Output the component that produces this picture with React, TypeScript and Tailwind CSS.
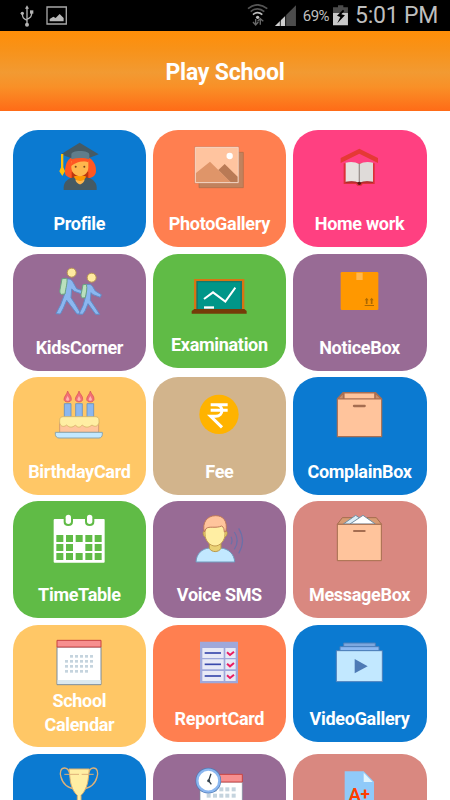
import React from 'react';

interface Tile {
  label: string;
  color: string;
  icon: React.ReactNode;
  height?: string;
  labelClass?: string;
}

interface IconProps {
  viewBox: string;
  children: React.ReactNode;
}

function Icon({ viewBox, children }: IconProps) {
  return (
    <svg viewBox={viewBox} className="w-16 h-16 shrink-0 -ml-[0.4px]">
      {children}
    </svg>
  );
}

const ProfileIcon = () => (
  <Icon viewBox="142 30 192 192">
    <path d="M196 160c-1-32 12-54 44-54s51 22 49 48c0 12-12 20-22 21h-50c-12-2-20-8-21-15z" fill="#ff5722" />
    <path d="M216 155h50v30h-50z" fill="#bf360c" />
    <path d="M192 210v-8c0-17 15-28 32-30h34c18 2 33 14 33 30v8z" fill="#455a64" />
    <path d="M224 168h34v5l-16 20-18-20z" fill="#ff9800" />
    <path d="M227 178q14 10 28 0c-1 8-8 15-14 15s-13-7-14-15z" fill="#ffb74d" />
    <path d="M215 124h51v18c0 16-12 27-25 27s-26-11-26-27z" fill="#ffb74d" />
    <path d="M214 138c0-17 7-25 20-26h32v15c-13-8-34-2-52 11z" fill="#ff5722" />
    <path d="M240 68l57 35-27 10H211l-27-10z" fill="#455a64" />
    <path d="M215 118v-14c0-7 10-11 26-11s28 4 28 11v14c-15-5-36-5-54 0z" fill="#607d8b" />
    <path d="M184 102h7v40l5 12-8 14-9-14 5-12z" fill="#ffc107" />
    <circle cx="228" cy="140" r="3" fill="#784719" />
    <circle cx="254" cy="140" r="3" fill="#784719" />
  </Icon>
);

const PhotoIcon = () => (
  <Icon viewBox="562 30 192 192">
    <path d="M598 97h133v106H598z" fill="#c1825d" stroke="#aa6c49" strokeWidth="2" />
    <path d="M587 82h129v106H587z" fill="#ffc49f" />
    <path d="M588 160l43-35 62 62H588z" fill="#df9569" />
    <path d="M656 150l19-18 39 38v17h-21z" fill="#b97a55" />
    <path d="M587 82h129v106H587z" fill="none" stroke="#f7e8e0" strokeWidth="2.5" />
    <path d="M585 80h133v110H585z" fill="none" stroke="#c98263" strokeWidth="1.5" />
    <circle cx="690" cy="108" r="9.5" fill="#fff" />
  </Icon>
);

const HomeworkIcon = () => (
  <Icon viewBox="307 30 192 192">
    <path d="M348 114l56-28 56 28v15l-56-28-56 28z" fill="#e53935" />
    <path d="M357 130h93v62h-36l-4 5h-12l-4-5h-37z" fill="#dc3038" />
    <path d="M363 128q24-5 41 4v56q-17-6-41-2z" fill="#e6e2e0" />
    <path d="M445 128q-24-5-41 4v56q17-6 41-2z" fill="#dfdbd9" />
    <path d="M404 131v56" stroke="#9c9390" strokeWidth="4" />
    <path d="M363 187q26-4 41 3 15-7 41-3" fill="none" stroke="#a52b2d" strokeWidth="4" />
    <circle cx="404" cy="190" r="5" fill="#5a1617" />
  </Icon>
);

const KidsIcon = () => (
  <Icon viewBox="142 18 192 192">
    <g stroke="#618dc9" strokeWidth="3" fill="#8bb7f0" strokeLinejoin="round">
      <path d="M200 94c10-4 17 2 21 10l10 18 16 6-3 9-20-7-8-7-2 26 13 20 17 29h-12l-31-41-10 24-9 17-13-1 14-27 12-32z" />
      <path d="M261 110c10-3 16 1 20 9l6 10 18 11-3 8-22-8-6-6-2 23 15 22 13 20h-12l-23-32-9 22-7 10-11-1 12-25 8-28z" />
    </g>
    <g stroke="#6aa384" strokeWidth="3" fill="#bae0bd">
      <path d="M187 92l14-1c4 8-3 31-5 47l-11 1c-5-3-5-9-4-14z" />
      <path d="M250 110l10-1c4 12-1 28-3 40l-9 1c-5-4-4-10-3-14z" />
    </g>
    <g stroke="#b99751" strokeWidth="3" fill="#ffeaa0">
      <circle cx="216" cy="74" r="13.5" />
      <circle cx="276" cy="89" r="13.5" />
    </g>
  </Icon>
);

const ExamIcon = () => (
  <Icon viewBox="562 18 192 192">
    <path d="M583 93h151v92H583z" fill="#d87413" />
    <path d="M590 99h137v84H590z" fill="#13796c" />
    <path d="M595 103h127v80H595z" fill="#009688" />
    <path d="M576 189l8-6h150l7 6v8H576z" fill="#753b08" />
    <path d="M613 153l27-20 37 28 30-42" fill="none" stroke="#fff" strokeWidth="6" />
    <path d="M613 175h30v7h-30z" fill="#fff" />
  </Icon>
);

const NoticeIcon = () => (
  <Icon viewBox="307 18 192 192">
    <rect x="348" y="72" width="113" height="114" rx="4" fill="#ff9800" />
    <path d="M395 74h19v22h-19z" fill="#ffb74d" />
    <path d="M426 149l6 8h-3.500v11h-5v-11H420zM441 149l6 8h-3.500v11h-5v-11H435zM420 171h28v3h-28z" fill="#ad6800" />
  </Icon>
);

const CakeIcon = () => (
  <Icon viewBox="142 16 192 192">
    {[204, 238, 272].map((x) => (
      <g key={x}>
        <path d={`M${x - 10} 96h20v43h-20z`} fill="#8bb7f0" stroke="#6790bf" strokeWidth="2.500" />
        <path d={`M${x} 58c2 9 12 14 11 25 0 5-5 8-11 8s-11-3-11-8c0-9 9-15 11-25z`} fill="#f36f75" stroke="#d55257" strokeWidth="2" />
        <path d={`M${x} 72c1 5 5 7 5 12q-5 7-10 0c0-5 4-7 5-12z`} fill="#ffb4ae" />
      </g>
    ))}
    <path d="M180 151h117v31H180z" fill="#ffc49c" stroke="#ca926c" strokeWidth="2.500" />
    <path d="M180 154v-9c0-6 4-10 11-10h96c7 0 11 4 11 10v9c-4 10-12 13-21 6-9 7-19 10-29 0-7 9-15 8-21 0-9 9-18 8-26 0-9 7-18 5-21-6z" fill="#ffeea3" stroke="#d5b468" strokeWidth="2.500" />
    <path d="M167 182h141v6c0 6-4 11-10 11H178c-6 0-11-5-11-11z" fill="#c2e8ff" stroke="#8aa5ae" strokeWidth="3" />
  </Icon>
);

const FeeIcon = () => (
  <Icon viewBox="562 16 192 192">
    <circle cx="658" cy="128" r="59" fill="#ffb300" />
    <path d="M633 99h51M633 116h51M633 99h15c25 0 25 35 0 35h-15l34 33" fill="none" stroke="#fff" strokeWidth="9" />
  </Icon>
);

const ComplainIcon = () => (
  <Icon viewBox="307 16 192 192">
    <g stroke="#a96f52" strokeWidth="3.500" strokeLinejoin="round">
      <path d="M338 82l17-19h98l18 19z" fill="#ca8f6b" />
      <path d="M358 64h93v18h-93z" fill="#ffc49c" />
      <path d="M338 82h133v113H338z" fill="#ffc49c" />
      <path d="M338 82l18-18v18M471 82l-20-18v18" fill="none" />
    </g>
    <path d="M388 103h32" stroke="#a56d50" strokeWidth="7" strokeLinecap="round" />
  </Icon>
);

const TimeTableIcon = () => (
  <Icon viewBox="142 15 192 192">
    <rect x="162" y="69" width="153" height="131" rx="3" fill="#fff" />
    {[206, 270].map((x) => (
      <g key={x}>
        <path d={`M${x - 14} 67v10q0 13 14 13t14-13V67z`} fill="#60bb46" />
        <rect x={x - 8} y="56" width="16" height="28" rx="8" fill="#fff" />
      </g>
    ))}
    {[117, 144, 171].map((y) =>
      [170, 199, 228, 257, 285].map((x) =>
        y === 144 && x === 228 ? null : <rect key={`${x}-${y}`} x={x} y={y} width="21" height="21" fill="#60bb46" />
      )
    )}
  </Icon>
);

const VoiceIcon = () => (
  <Icon viewBox="562 15 192 192">
    <path d="M589 198c1-25 18-40 40-42h34c23 2 41 18 42 42z" fill="#c2e8ff" stroke="#719abd" strokeWidth="3" />
    <path d="M629 143h35v14c-7 13-28 13-35 0z" fill="#ead174" stroke="#b99748" strokeWidth="3" />
    <path d="M616 105c-9-1-6 17 2 19M676 105c10-1 7 17-2 19" fill="#f5d978" stroke="#b99748" strokeWidth="3" />
    <path d="M616 94c9-9 46-12 60 0v20c0 20-15 36-30 36s-30-16-30-36z" fill="#ffeea3" stroke="#c39d4f" strokeWidth="3" />
    <path d="M614 108c-7-27 7-49 34-49 23 0 36 16 31 46l-5 3c-1-9-1-14-8-18-17 8-38-1-47 8z" fill="#ffc49c" stroke="#bf7959" strokeWidth="3" />
    <path d="M694 122q6 11 0 23M704 108q17 25 0 52M717 97q23 37 0 75" fill="none" stroke="#6b70a8" strokeWidth="3.500" />
  </Icon>
);

const MessageIcon = () => (
  <Icon viewBox="307 15 192 192">
    <g strokeWidth="3" strokeLinejoin="round">
      <path d="M338 85l15-20h102l16 20z" fill="#d89b72" stroke="#a46d4d" />
      <path d="M356 84l37-26 39 26z" fill="#dcecf6" stroke="#718da1" />
      <path d="M376 84l39-26 37 26z" fill="#fff" stroke="#718da1" />
      <path d="M338 85h132v109H338z" fill="#ffc49c" stroke="#a46d4d" />
    </g>
    <path d="M388 105h32" stroke="#a56d50" strokeWidth="6" strokeLinecap="round" />
  </Icon>
);

const CalendarIcon = () => (
  <Icon viewBox="142 15 192 192">
    <path d="M172 81h132v113H172z" fill="#fff" stroke="#788b9c" strokeWidth="3" />
    <path d="M174 180h129v12H174z" fill="#dce9ef" />
    <path d="M172 61h132v20H172z" fill="#f78f8f" stroke="#c74343" strokeWidth="3" />
    {[105, 120, 135, 150].map((y, row) =>
      [196, 211, 226, 241, 256, 271].map((x, col) =>
        (row === 0 && col === 0) || (row === 3 && col === 5) ? null : (
          <rect key={`${x}-${y}`} x={x} y={y} width="9" height="8" fill="#c5d4de" />
        )
      )
    )}
  </Icon>
);

const ReportIcon = () => (
  <Icon viewBox="562 15 192 192">
    <path d="M601 65h114v125H601z" fill="#9fa8da" />
    {[84, 118, 153].map((y) => (
      <g key={y}>
        <path d={`M608 ${y}h64v30h-64zM677 ${y}h31v30h-31z`} fill="#e8eaf6" />
        <path d={`M615 ${y + 15}h49`} stroke="#3949ab" strokeWidth="5" />
        <path d={`M682 ${y + 13}l9 8 12-10`} fill="none" stroke="#e91e63" strokeWidth="6" />
      </g>
    ))}
  </Icon>
);

const VideoIcon = () => (
  <Icon viewBox="307 15 192 192">
    <g stroke="#4d7eb9" strokeWidth="3">
      <path d="M357 69h95v11h-95z" fill="#7da8df" />
      <path d="M346 80h117v12H346z" fill="#8bb7f0" />
      <path d="M335 92h138v93H335z" fill="#c2e8ff" />
    </g>
    <path d="M390 117l39 22-39 21z" fill="#4e7ab5" />
  </Icon>
);

const TrophyIcon = () => (
  <Icon viewBox="142 402 192 192">
    <path d="M211 461c-4-12-9-17-16-17-13 0-15 14-11 27 5 21 22 35 43 35M266 461c3-12 8-17 15-17 13 0 15 14 11 27-5 21-22 35-43 35" fill="none" stroke="#dfb177" strokeWidth="4" />
    <path d="M208 447h61l-3 28c-3 26-13 43-22 51v32h-11v-32c-10-8-20-27-22-51z" fill="#ffeea3" stroke="#dcb06f" strokeWidth="3" />
    <path d="M194 463h44M246 463h36" stroke="#dfb177" strokeWidth="3" />
  </Icon>
);

const ScheduleIcon = () => (
  <Icon viewBox="562 402 192 192">
    <path d="M601 486h127v90H601z" fill="#fff" stroke="#788b9c" strokeWidth="2" />
    <path d="M626 463h102v23H626z" fill="#f78f8f" stroke="#c74343" strokeWidth="3" />
    {[502, 521, 540].map((y) =>
      [621, 640, 659, 677, 696].map((x) => <rect key={`${x}-${y}`} x={x} y={y} width="12" height="12" fill="#c5d4de" />)
    )}
    <circle cx="626" cy="482" r="33" fill="#fff" stroke="#4e7ab5" strokeWidth="11" />
    <circle cx="626" cy="482" r="33" fill="#fff" stroke="#8bb7f0" strokeWidth="7" />
    <path d="M634 461l-7 21 8 11" fill="none" stroke="#35434e" strokeWidth="4" />
    <circle cx="627" cy="482" r="4.500" fill="#35434e" />
  </Icon>
);

const GradeIcon = () => (
  <Icon viewBox="307 402 192 192">
    <path d="M360 454h57l31 31v91h-88z" fill="#90caf9" />
    <path d="M417 458l27 28h-27z" fill="#e1f5fe" />
    <text x="373" y="539" fontFamily="Roboto" fontWeight="700" fontSize="52" textLength="63" lengthAdjust="spacingAndGlyphs" fill="#ff3d00">
      A+
    </text>
  </Icon>
);

const tiles: Tile[] = [
  { label: 'Profile', color: 'bg-[#0b7ad1]', icon: <ProfileIcon /> },
  { label: 'PhotoGallery', color: 'bg-[#ff7f50]', icon: <PhotoIcon /> },
  { label: 'Home work', color: 'bg-[#ff4081]', icon: <HomeworkIcon /> },
  { label: 'KidsCorner', color: 'bg-[#986b95]', icon: <KidsIcon /> },
  { label: 'Examination', color: 'bg-[#60bb46]', icon: <ExamIcon />, height: 'h-[114.5px]', labelClass: 'mt-[15.5px]' },
  { label: 'NoticeBox', color: 'bg-[#986b95]', icon: <NoticeIcon /> },
  { label: 'BirthdayCard', color: 'bg-[#ffc766]', icon: <CakeIcon /> },
  { label: 'Fee', color: 'bg-[#d2b48c]', icon: <FeeIcon /> },
  { label: 'ComplainBox', color: 'bg-[#0b7ad1]', icon: <ComplainIcon /> },
  { label: 'TimeTable', color: 'bg-[#60bb46]', icon: <TimeTableIcon /> },
  { label: 'Voice SMS', color: 'bg-[#986b95]', icon: <VoiceIcon /> },
  { label: 'MessageBox', color: 'bg-[#d98880]', icon: <MessageIcon /> },
  { label: 'School Calendar', color: 'bg-[#ffc766]', icon: <CalendarIcon />, height: 'h-[122.4px]', labelClass: 'w-20' },
  { label: 'ReportCard', color: 'bg-[#ff7f50]', icon: <ReportIcon /> },
  { label: 'VideoGallery', color: 'bg-[#0b7ad1]', icon: <VideoIcon /> },
  { label: '', color: 'bg-[#0b7ad1]', icon: <TrophyIcon /> },
  { label: '', color: 'bg-[#986b95]', icon: <ScheduleIcon /> },
  { label: '', color: 'bg-[#d98880]', icon: <GradeIcon /> },
];

function StatusBar() {
  return (
    <div className="h-[31px] shrink-0 bg-black flex items-center pl-5 pr-[13px] text-[#bebebe]">
      <svg viewBox="60 14 42 66" className="w-3.5 h-[22px]" fill="none" stroke="#b4b4b4" strokeWidth="4">
        <path d="M81 20v50M81 60c-11-5-14-8-14-21M81 57c11-5 14-8 14-20" />
        <path d="M81 15l6 10H75z" fill="#b4b4b4" stroke="none" />
        <circle cx="67" cy="39" r="5" fill="#b4b4b4" stroke="none" />
        <path d="M90 30h10v10H90z" fill="#b4b4b4" stroke="none" />
        <circle cx="81" cy="73" r="6" fill="#b4b4b4" stroke="none" />
      </svg>
      <svg viewBox="138 17 64 57" className="w-[21.3px] h-[19px] ml-3">
        <path d="M141 20h58v51h-58z" fill="none" stroke="#a8a8a8" strokeWidth="4" />
        <path d="M149 63v-7l11-7 7 4 12-12 12 12v10z" fill="#b8b8b8" />
      </svg>
      <div className="flex-1" />
      <svg viewBox="66 14 64 67" className="w-[21.3px] h-[22.3px]" fill="none">
        <path d="M69 28q29-23 58 0M77 37q21-17 41 0" stroke="#555" strokeWidth="5" />
        <path d="M84 46q14-12 28 0" stroke="#bdbdbd" strokeWidth="5" />
        <circle cx="98" cy="54" r="5" fill="#bdbdbd" />
        <path d="M92 59v16M84 68l8 9 8-9M106 76V60M98 66l8-8 9 8" stroke="#686868" strokeWidth="4" />
      </svg>
      <svg viewBox="152 18 64 64" className="w-[21.3px] h-[21.3px] ml-[7px]">
        <path d="M152 81l63-62v62z" fill="#4c4c4c" />
        <path d="M152 81l31-30v30z" fill="#d0d0d0" />
        <path d="M168 62v19M184 48v33" stroke="#000" strokeWidth="2.500" />
      </svg>
      <span className="ml-1.5 w-[27px] text-[15px] leading-none tracking-[-0.5px] whitespace-nowrap mt-px">69%</span>
      <svg viewBox="324 14 46 62" className="w-[15.3px] h-[20.6px] ml-[3px]">
        <path d="M324 21h15v-6h16v6h14v18h-45z" fill="#4b4b4b" />
        <path d="M324 38h45v37h-45z" fill="#c8c8c8" />
        <path d="M354 28l-18 18 10 4-9 19 23-24-11-3 9-10z" fill="#000" />
      </svg>
      <span className="ml-[7px] w-[82px] text-[23px] leading-none tracking-[-0.2px] whitespace-nowrap">5:01 PM</span>
    </div>
  );
}

export default function App() {
  return (
    <div className="w-[450px] h-[800px] overflow-hidden flex flex-col bg-white font-['Roboto',sans-serif]">
      <StatusBar />
      <header className="h-20 shrink-0 flex items-center justify-center bg-[linear-gradient(180deg,#ff8e08_0%,#f89218_22%,#f29a32_52%,#f99027_70%,#ff6b17_100%)]">
        <h1 className="text-[23px] leading-8 font-bold tracking-[-0.2px] text-white mt-1">Play School</h1>
      </header>

      {/* Menu tiles */}
      <main className="grid grid-cols-[133.6px_133.6px_134px] gap-[6.4px] items-start pt-[19px] pl-[12.6px]">
        {tiles.map((tile, index) => (
          <div
            key={index}
            className={`flex flex-col items-center rounded-[25px] ${tile.height ?? 'h-[117.3px]'} ${tile.color}`}
          >
            {tile.icon}
            <span className={`text-center text-[18px] leading-6 font-bold tracking-[-0.3px] text-white ${tile.labelClass ?? 'mt-[18.4px]'}`}>
              {tile.label}
            </span>
          </div>
        ))}
      </main>
    </div>
  );
}
